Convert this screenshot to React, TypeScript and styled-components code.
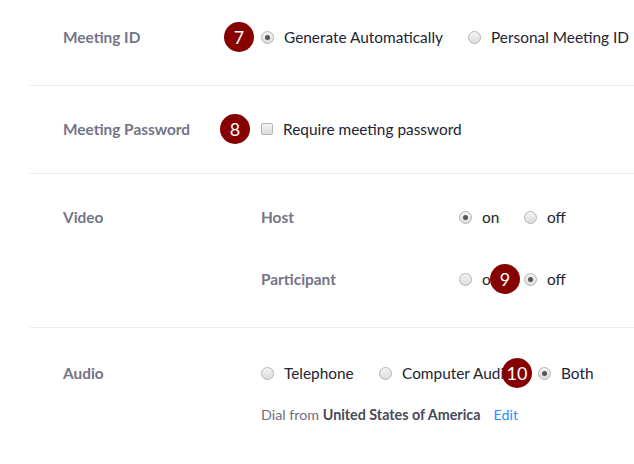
import React from "react";
import styled, { createGlobalStyle } from "styled-components";

const GlobalStyle = createGlobalStyle`
  html, body {
    margin: 0;
    padding: 0;
    background: #fff;
    font-family: Lato, "Liberation Sans", sans-serif;
  }
  body {
    width: 634px;
    height: 464px;
    overflow: hidden;
  }
`;

const Page = styled.div`
  margin-top: -6px;
  margin-left: 30px;
  width: 604px;
  overflow: hidden;
`;

const Row = styled.div<{ $last?: boolean; $top?: number; $bottom?: number }>`
  display: grid;
  grid-template-columns: 198px 1fr;
  padding: ${(p) => p.$top ?? 33}px 0 ${(p) => p.$bottom ?? 34}px 33px;
  border-bottom: ${(p) => (p.$last ? "none" : "1px solid #ededf0")};
`;

const Label = styled.div`
  font-size: 15.4px;
  font-weight: 700;
  color: #747487;
  line-height: 20px;
  height: 20px;
  white-space: nowrap;
`;

const Content = styled.div<{ $gap?: number }>`
  display: flex;
  flex-direction: column;
  gap: ${(p) => p.$gap ?? 0}px;
`;

const Line = styled.div<{ $gap?: number }>`
  display: flex;
  align-items: center;
  gap: ${(p) => p.$gap ?? 25}px;
  height: 20px;
  white-space: nowrap;
`;

const SubLine = styled.div`
  display: grid;
  grid-template-columns: 198px auto;
  align-items: center;
  height: 20px;
`;

const SubLabel = styled(Label)``;

const Option = styled.label<{ $width?: number }>`
  position: relative;
  display: flex;
  align-items: center;
  gap: 10px;
  font-size: 15.4px;
  color: #232333;
  line-height: 20px;
  white-space: nowrap;
  flex: none;
  ${(p) => (p.$width ? `width: ${p.$width}px;` : "")}
`;

const Radio = styled.span<{ $checked?: boolean }>`
  position: relative;
  box-sizing: border-box;
  width: 13px;
  height: 13px;
  border-radius: 50%;
  border: 1px solid #b4b4b4;
  background: linear-gradient(#f4f4f4, #dcdcdc);
  flex: none;
  &::after {
    content: "";
    display: ${(p) => (p.$checked ? "block" : "none")};
    position: absolute;
    left: 3px;
    top: 3px;
    width: 5px;
    height: 5px;
    border-radius: 50%;
    background: #555;
  }
`;

const Check = styled.span`
  box-sizing: border-box;
  width: 12px;
  height: 12px;
  border-radius: 2px;
  border: 1px solid #b4b4b4;
  background: linear-gradient(#f4f4f4, #dcdcdc);
  flex: none;
`;

const Badge = styled.span<{ $left: number }>`
  position: absolute;
  left: ${(p) => p.$left}px;
  top: -5px;
  width: 30px;
  height: 30px;
  border-radius: 50%;
  background: #870000;
  color: #fff;
  font-size: 18px;
  line-height: 30px;
  text-align: center;
  z-index: 2;
`;

const Dial = styled.div`
  margin-top: 22px;
  font-size: 14.3px;
  color: #6e6e7e;
  line-height: 20px;
  white-space: nowrap;
  b {
    color: #4a4a58;
    font-weight: 700;
  }
`;

const EditLink = styled.a`
  margin-left: 13px;
  color: #2d8cff;
  text-decoration: none;
`;

export default function App() {
  return (
    <>
      <GlobalStyle />
      <Page>
        <Row $bottom={38}>
          <Label>Meeting ID</Label>
          <Line>
            <Option $width={182}>
              <Badge $left={-37}>7</Badge>
              <Radio $checked />
              Generate Automatically
            </Option>
            <Option>
              <Radio />
              Personal Meeting ID
            </Option>
          </Line>
        </Row>
        <Row>
          <Label>Meeting Password</Label>
          <Line>
            <Option>
              <Badge $left={-41}>8</Badge>
              <Check />
              Require meeting password
            </Option>
          </Line>
        </Row>
        <Row $bottom={38}>
          <Label>Video</Label>
          <Content $gap={42}>
            <SubLine>
              <SubLabel>Host</SubLabel>
              <Line $gap={0}>
                <Option $width={65}>
                  <Radio $checked />
                  on
                </Option>
                <Option>
                  <Radio />
                  off
                </Option>
              </Line>
            </SubLine>
            <SubLine>
              <SubLabel>Participant</SubLabel>
              <Line $gap={0}>
                <Option $width={65}>
                  <Radio />
                  on
                </Option>
                <Option>
                  <Badge $left={-34}>9</Badge>
                  <Radio $checked />
                  off
                </Option>
              </Line>
            </SubLine>
          </Content>
        </Row>
        <Row $last $top={35}>
          <Label>Audio</Label>
          <Content>
            <Line $gap={26}>
              <Option $width={92}>
                <Radio />
                Telephone
              </Option>
              <Option $width={133}>
                <Radio />
                Computer Audio
              </Option>
              <Option>
                <Badge $left={-36}>10</Badge>
                <Radio $checked />
                Both
              </Option>
            </Line>
            <Dial>
              Dial from <b>United States of America</b>
              <EditLink href="#">Edit</EditLink>
            </Dial>
          </Content>
        </Row>
      </Page>
    </>
  );
}
